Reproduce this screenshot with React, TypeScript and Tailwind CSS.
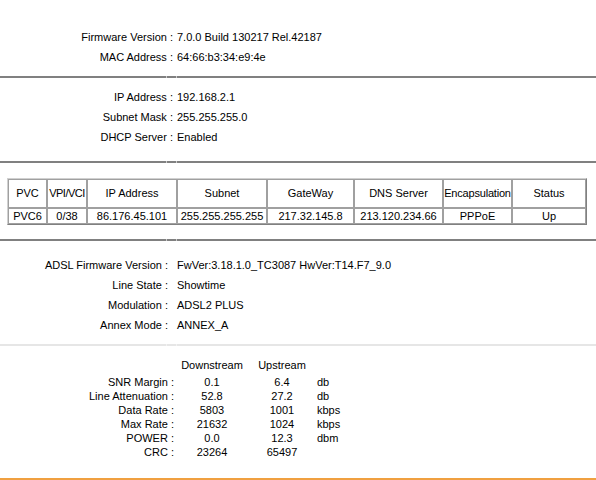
import React from "react";

const font = { fontFamily: '"Liberation Sans", Arial, sans-serif' };

function Sep({ light = false }: { light?: boolean }) {
  const c = light ? "bg-[#e6e6e6]" : "bg-[#808080]";
  const g = light ? "bg-[#f2f2f2]" : "bg-[#c8c8c8]";
  return (
    <div className="flex h-[2px] w-full">
      <div className={`w-[166px] ${c}`} />
      <div className={`w-px ${g}`} />
      <div className={`w-[9px] ${c}`} />
      <div className={`w-px ${g}`} />
      <div className={`flex-1 ${c}`} />
    </div>
  );
}

function Row({ label, value, lw = 173, pl = 4 }: { label: string; value: string; lw?: number; pl?: number }) {
  return (
    <div className="flex h-[20px] items-center leading-[20px] whitespace-nowrap">
      <div className="text-right" style={{ width: lw }}>{label} :</div>
      <div style={{ paddingLeft: pl }}>{value}</div>
    </div>
  );
}

const stats = [
  ["SNR Margin", "0.1", "6.4", "db"],
  ["Line Attenuation", "52.8", "27.2", "db"],
  ["Data Rate", "5803", "1001", "kbps"],
  ["Max Rate", "21632", "1024", "kbps"],
  ["POWER", "0.0", "12.3", "dbm"],
  ["CRC", "23264", "65497", ""],
];

const th = "border border-[#a0a0a0] p-0 text-center font-normal whitespace-nowrap";
const td = "border border-[#a0a0a0] p-0 text-center whitespace-nowrap leading-[14px]";

export default function App() {
  return (
    <div className="w-[596px] h-[480px] bg-white text-[11px] text-black overflow-hidden flex flex-col" style={font}>
      <div className="pt-[27px] pb-[9px]">
        <Row label="Firmware Version" value="7.0.0 Build 130217 Rel.42187" />
        <Row label="MAC Address" value="64:66:b3:34:e9:4e" />
      </div>
      <Sep />
      <div className="pt-[9px] pb-[14px]">
        <Row label="IP Address" value="192.168.2.1" />
        <Row label="Subnet Mask" value="255.255.255.0" />
        <Row label="DHCP Server" value="Enabled" />
      </div>
      <Sep />
      <div className="pt-[15px] pb-[14px] pl-[7px]">
        <table className="table-fixed w-[580px] border-separate border-spacing-0 border border-t-[#d0d0d0] border-l-[#d0d0d0] border-r-[#808080] border-b-[#808080]">
          <colgroup>
            <col className="w-[39px]" />
            <col className="w-[40px]" />
            <col className="w-[90px]" />
            <col className="w-[90px]" />
            <col className="w-[87px]" />
            <col className="w-[89px]" />
            <col className="w-[69px]" />
            <col className="w-[74px]" />
          </colgroup>
          <thead>
            <tr className="h-[29px]">
              <th className={th}>PVC</th>
              <th className={`${th} tracking-[-0.5px]`}>VPI/VCI</th>
              <th className={th}>IP Address</th>
              <th className={th}>Subnet</th>
              <th className={th}>GateWay</th>
              <th className={th}>DNS Server</th>
              <th className={`${th} tracking-[-0.2px]`}>Encapsulation</th>
              <th className={th}>Status</th>
            </tr>
          </thead>
          <tbody>
            <tr className="h-[16px]">
              <td className={td}>PVC6</td>
              <td className={td}>0/38</td>
              <td className={td}>86.176.45.101</td>
              <td className={td}>255.255.255.255</td>
              <td className={td}>217.32.145.8</td>
              <td className={td}>213.120.234.66</td>
              <td className={td}>PPPoE</td>
              <td className={td}>Up</td>
            </tr>
          </tbody>
        </table>
      </div>
      <Sep />
      <div className="pt-[14px] pb-[9px]">
        <Row label="ADSL Firmware Version" value="FwVer:3.18.1.0_TC3087 HwVer:T14.F7_9.0" lw={168} pl={9} />
        <Row label="Line State" value="Showtime" lw={168} pl={9} />
        <Row label="Modulation" value="ADSL2 PLUS" lw={168} pl={9} />
        <Row label="Annex Mode" value="ANNEX_A" lw={168} pl={9} />
      </div>
      <Sep light />
      <div className="pt-[11px] flex-1">
        <div className="flex h-[18px] leading-[16px] whitespace-nowrap">
          <div className="w-[174px]" />
          <div className="w-[76px] text-center">Downstream</div>
          <div className="w-[64px] text-center">Upstream</div>
        </div>
        {stats.map(([l, d, u, unit]) => (
          <div key={l} className="flex h-[14px] leading-[14px] whitespace-nowrap">
            <div className="w-[174px] text-right">{l} :</div>
            <div className="w-[76px] text-center">{d}</div>
            <div className="w-[64px] text-center">{u}</div>
            <div className="pl-[3px]">{unit}</div>
          </div>
        ))}
      </div>
      <div className="h-[2px] bg-[#f0a040]" />
    </div>
  );
}
